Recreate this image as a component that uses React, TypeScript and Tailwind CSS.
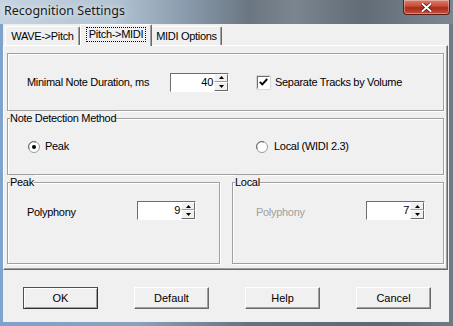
import React from "react";

const ui = { fontFamily: '"Liberation Sans", Arial, sans-serif' };

function Spinner({ value }: { value: string }) {
  return (
    <div className="flex h-[19px] w-[59px] border border-t-[#6d6d6d] border-l-[#6d6d6d] border-r-white border-b-white bg-white">
      <div className="flex-1 text-right text-[11px] leading-[17px] pr-[1px] text-black">{value}</div>
      <div className="flex w-[14px] flex-col">
        <div className="flex h-[8px] items-center justify-center border border-t-white border-l-white border-r-[#696969] border-b-[#a0a0a0] bg-[#f0f0f0]">
          <svg width="5" height="3" viewBox="0 0 5 3"><path d="M2.5 0 L5 3 L0 3 Z" fill="#000" /></svg>
        </div>
        <div className="flex h-[9px] items-center justify-center border border-t-white border-l-white border-r-[#696969] border-b-[#696969] bg-[#f0f0f0]">
          <svg width="5" height="3" viewBox="0 0 5 3"><path d="M0 0 L5 0 L2.5 3 Z" fill="#000" /></svg>
        </div>
      </div>
    </div>
  );
}

function Radio({ checked }: { checked?: boolean }) {
  return (
    <svg width="12" height="12" viewBox="0 0 12 12">
      <circle cx="6" cy="6" r="5.5" fill="#fff" stroke="#9a9a9a" />
      <path d="M1.2 8 A5 5 0 0 1 8 1.2" fill="none" stroke="#6a6a6a" />
      {checked && <circle cx="6" cy="6" r="2" fill="#000" />}
    </svg>
  );
}

function Group({ title, className, children }: { title?: string; className: string; children?: React.ReactNode }) {
  return (
    <div className={`relative border border-[#a0a0a0] shadow-[inset_1px_1px_0_#fff,1px_1px_0_#fff] ${className}`}>
      {title && (
        <div className="absolute -top-[8px] left-[2px] bg-[#f0f0f0] text-[11px] leading-[14px] tracking-[-0.3px] text-black">
          {title}
        </div>
      )}
      {children}
    </div>
  );
}

function Btn({ label, def }: { label: string; def?: boolean }) {
  return (
    <div
      className={`flex h-[22px] w-[75px] items-center justify-center border text-[11px] text-black ${
        def
          ? "border-[#505050] border-r-[#303030] border-b-[#303030] shadow-[inset_1px_1px_0_#fff,inset_-1px_-1px_0_#a0a0a0]"
          : "border-t-white border-l-white border-r-[#696969] border-b-[#696969] shadow-[inset_-1px_-1px_0_#a0a0a0]"
      } bg-[#f0f0f0]`}
    >
      {label}
    </div>
  );
}

export default function App() {
  return (
    <div
      className="flex h-[326px] w-[453px] flex-col overflow-hidden bg-[linear-gradient(90deg,#7ea3cc_0%,#8aa2bb_30%,#66727e_55%,#5e6872_85%,#6f7a85_100%)]"
      style={ui}
    >
      {/* Title bar */}
      <div className="flex h-[24px] items-start justify-between overflow-hidden bg-[linear-gradient(90deg,#c6d4e1_0%,#b3c4d4_25%,#8798aa_42%,#6b7681_55%,#7a8590_65%,#626c76_80%,#7d8792_100%)]">
        <div className="pl-[4px] pt-[3px] text-[12.5px] leading-[16px] text-[#1b1b1b] [text-shadow:0_0_6px_#fff]" style={{ fontFamily: '"Noto Sans", "Liberation Sans", sans-serif' }}>
          Recognition Settings
        </div>
        <div className="mr-[3px] flex h-[15px] w-[47px] items-center justify-center rounded-b-[4px] border border-t-0 border-[#5a1c14] bg-[linear-gradient(#d8806f_0%,#c84a34_45%,#a92a19_55%,#c4513a_100%)] shadow-[inset_0_0_0_1px_rgba(255,255,255,0.35)]">
          <svg width="11" height="9" viewBox="0 0 11 9">
            <path d="M1.5 1 L9.5 8 M9.5 1 L1.5 8" stroke="#3a1410" strokeWidth="3.4" strokeLinecap="square" />
            <path d="M1.5 1 L9.5 8 M9.5 1 L1.5 8" stroke="#fff" strokeWidth="2" strokeLinecap="square" />
          </svg>
        </div>
      </div>

      <div className="flex flex-1 pl-[3px] pr-[4px] pb-[4px]">
        <div className="flex h-[298px] w-[446px] flex-col bg-[#f0f0f0] text-black">
          {/* Tabs */}
          <div className="relative z-10 flex h-[21px] items-end pl-[2px] text-[11px] tracking-[-0.3px]">
            <div className="flex h-[19px] w-[75px] items-center justify-center rounded-t-[2px] border border-b-0 border-t-white border-l-white border-r-[#696969] shadow-[inset_-1px_0_0_#a0a0a0]">
              WAVE-&gt;Pitch
            </div>
            <div className="-mb-[1px] flex h-[22px] w-[72px] items-start justify-center rounded-t-[2px] border border-b-0 border-t-white border-l-white border-r-[#696969] bg-[#f0f0f0] pt-[2px] shadow-[inset_-1px_0_0_#a0a0a0]">
              <span className="border border-dotted border-black px-[2px] leading-[13px]">Pitch-&gt;MIDI</span>
            </div>
            <div className="flex h-[19px] w-[70px] items-center justify-center rounded-t-[2px] border border-b-0 border-l-0 border-t-white border-r-[#696969] shadow-[inset_-1px_0_0_#a0a0a0]">
              MIDI Options
            </div>
          </div>

          {/* Tab panel */}
          <div className="flex h-[225px] w-[445px] flex-col border border-t-white border-l-white border-r-[#696969] border-b-[#696969] px-[3px] pt-[7px] text-[11px] tracking-[-0.3px] shadow-[inset_-1px_-1px_0_#a0a0a0]">
            <Group className="flex h-[58px] items-center pl-[19px]">
              <div className="w-[143px]">Minimal Note Duration, ms</div>
              <Spinner value="40" />
              <div className="ml-[28px] flex h-[13px] w-[13px] items-center justify-center border border-t-[#6d6d6d] border-l-[#6d6d6d] border-r-white border-b-white bg-white shadow-[0_0_0_0.5px_#c0c0c0]">
                <svg width="9" height="8" viewBox="0 0 9 8">
                  <path d="M0.8 3.8 L3.3 6.3 L8.2 1" fill="none" stroke="#000" strokeWidth="1.9" />
                </svg>
              </div>
              <div className="ml-[5px]">Separate Tracks by Volume</div>
            </Group>

            <Group title="Note Detection Method" className="mt-[7px] flex h-[57px] items-center pl-[20px]">
              <Radio checked />
              <div className="ml-[5px] w-[211px]">Peak</div>
              <Radio />
              <div className="ml-[6px]">Local (WIDI 2.3)</div>
            </Group>

            <div className="mt-[7px] flex h-[82px] gap-[12px]">
              <Group title="Peak" className="flex w-[213px] items-start pl-[19px] pt-[18px]">
                <div className="w-[110px] pt-[3px]">Polyphony</div>
                <Spinner value="9" />
              </Group>
              <Group title="Local" className="flex flex-1 items-start pl-[23px] pt-[18px]">
                <div className="w-[110px] pt-[3px] text-[#a0a0a0]">Polyphony</div>
                <Spinner value="7" />
              </Group>
            </div>
          </div>

          {/* Buttons */}
          <div className="mt-[17px] flex gap-[36px] pl-[20px]">
            <Btn label="OK" def />
            <Btn label="Default" />
            <Btn label="Help" />
            <Btn label="Cancel" />
          </div>
        </div>
      </div>
    </div>
  );
}
